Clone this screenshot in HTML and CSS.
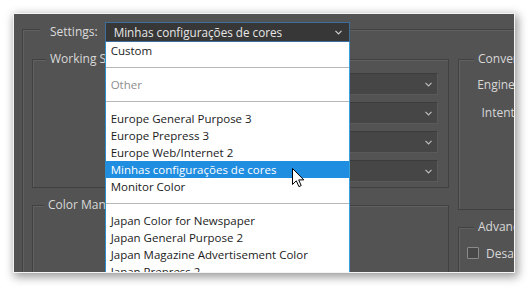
FILE: index.html
```html
<!DOCTYPE html>
<html lang="pt">
<head>
<meta charset="utf-8">
<title>Color Settings</title>
<link rel="stylesheet" href="styles.css">
</head>
<body>
<div class="panel">
  <div class="frame">
    <div class="settings-row">
      <span class="settings-label">Settings:</span>
      <div class="combo">
        <div class="combo-box">
          <span>Minhas configurações de cores</span>
          <svg class="chev" width="7" height="5" viewBox="0 0 7 5"><polyline points="0.5,0.8 3.5,3.8 6.5,0.8" fill="none" stroke="#cfcfcf" stroke-width="1.2"/></svg>
        </div>
        <ul class="menu">
          <li class="item">Custom</li>
          <li class="sep"></li>
          <li class="item muted">Other</li>
          <li class="sep"></li>
          <li class="item">Europe General Purpose 3</li>
          <li class="item">Europe Prepress 3</li>
          <li class="item">Europe Web/Internet 2</li>
          <li class="item active">Minhas configurações de cores</li>
          <li class="item">Monitor Color</li>
          <li class="sep"></li>
          <li class="item">Japan Color for Newspaper</li>
          <li class="item">Japan General Purpose 2</li>
          <li class="item">Japan Magazine Advertisement Color</li>
          <li class="item">Japan Prepress 2</li>
        </ul>
      </div>
    </div>
    <div class="columns">
      <div class="col-left">
        <section class="group working">
          <h3 class="group-title">Working Spaces</h3>
          <div class="selects">
            <div class="select"><svg class="chev" width="7" height="5" viewBox="0 0 7 5"><polyline points="0.5,0.8 3.5,3.8 6.5,0.8" fill="none" stroke="#bdbdbd" stroke-width="1.2"/></svg></div>
            <div class="select"><svg class="chev" width="7" height="5" viewBox="0 0 7 5"><polyline points="0.5,0.8 3.5,3.8 6.5,0.8" fill="none" stroke="#bdbdbd" stroke-width="1.2"/></svg></div>
            <div class="select"><svg class="chev" width="7" height="5" viewBox="0 0 7 5"><polyline points="0.5,0.8 3.5,3.8 6.5,0.8" fill="none" stroke="#bdbdbd" stroke-width="1.2"/></svg></div>
            <div class="select"><svg class="chev" width="7" height="5" viewBox="0 0 7 5"><polyline points="0.5,0.8 3.5,3.8 6.5,0.8" fill="none" stroke="#bdbdbd" stroke-width="1.2"/></svg></div>
          </div>
        </section>
        <section class="group policies">
          <h3 class="group-title">Color Management Policies</h3>
        </section>
      </div>
      <div class="col-right">
        <section class="group conversion">
          <h3 class="group-title">Conversion Options</h3>
          <div class="fields">
            <div class="field"><span class="field-label">Engine:</span></div>
            <div class="field"><span class="field-label">Intent:</span></div>
          </div>
        </section>
        <section class="group advanced">
          <h3 class="group-title">Advanced Controls</h3>
          <label class="check"><span class="box"></span>Desaturate Monitor Colors By:</label>
        </section>
      </div>
    </div>
  </div>
</div>
<svg class="cursor" width="14" height="21" viewBox="0 0 14 21"><path d="M1.5 1.5 L1.5 17.5 L5.3 13.8 L7.9 19.6 L10.2 18.6 L7.7 12.9 L12.8 12.9 Z" fill="#fff" stroke="#000" stroke-width="1" stroke-linejoin="miter"/></svg>
</body>
</html>
```

FILE: styles.css
```css
* { box-sizing: border-box; }
html, body { margin: 0; }
body {
  position: relative;
  width: 528px;
  height: 287px;
  padding: 13px;
  overflow: hidden;
  background: #fff;
  font-family: "Open Sans", "Noto Sans", sans-serif;
}
.panel {
  width: 502px;
  height: 260px;
  border: 1px solid #f4f4f4;
  background: #535353;
  box-shadow: 2px 3px 9px 1px rgba(0, 0, 0, 0.4);
  overflow: hidden;
}
.frame {
  width: 720px;
  height: 300px;
  margin: 15px 0 0 8px;
  border: 1px solid #414141;
  box-shadow: inset 1px 1px 0 #616161;
}
.settings-row {
  display: flex;
  align-items: center;
  height: 20px;
  margin-top: -8px;
}
.settings-label {
  flex: none;
  margin-left: 17px;
  padding: 0 7px 0 10px;
  line-height: 20px;
  background: #535353;
  color: #dcdcdc;
  font-size: 12px;
}
.combo {
  position: relative;
  flex: none;
  width: 245px;
  height: 20px;
}
.combo-box {
  height: 20px;
  display: flex;
  align-items: center;
  justify-content: space-between;
  padding: 0 7px 0 8px;
  background: #373737;
  border: 1px solid #3b6e9d;
  color: #e6e6e6;
  font-size: 11.7px;
  white-space: nowrap;
}
.chev { display: block; flex: none; }
.menu {
  position: absolute;
  top: 100%;
  left: 0;
  width: 245px;
  margin: 0;
  padding: 0;
  list-style: none;
  background: #fff;
  border-left: 1px solid #2b8fcf;
  border-right: 1px solid #35a2de;
  color: #1b1b1b;
  font-size: 11.5px;
  z-index: 2;
}
.item {
  height: 17px;
  line-height: 17px;
  padding-left: 5px;
  white-space: nowrap;
}
.item.muted { color: #8e8e8e; }
.item.active { background: #1f8de0; color: #fff; }
.sep {
  height: 1px;
  margin: 8px 0;
  background: #b7b7b7;
}
.columns {
  display: flex;
  gap: 9px;
  margin: 17px 0 0 9px;
}
.col-left {
  flex: none;
  width: 417px;
  display: flex;
  flex-direction: column;
  gap: 17px;
}
.col-right {
  flex: none;
  width: 200px;
  display: flex;
  flex-direction: column;
  gap: 17px;
}
.group {
  flex: none;
  border: 1px solid #414141;
  box-shadow: inset 1px 1px 0 #616161;
}
.working { height: 129px; }
.policies { height: 120px; }
.conversion { height: 151px; }
.advanced { height: 100px; }
.group-title {
  width: max-content;
  margin: -9px 0 0 13px;
  padding: 0 4px;
  background: #535353;
  color: #d8d8d8;
  font-size: 12px;
  font-weight: normal;
  line-height: 16px;
  white-space: nowrap;
}
.policies .group-title { margin-left: 11px; }
.conversion .group-title,
.advanced .group-title { margin-left: 15px; }
.selects {
  width: 290px;
  margin: 6px 10px 0 auto;
  display: flex;
  flex-direction: column;
  gap: 7px;
}
.select {
  height: 22px;
  display: flex;
  align-items: center;
  justify-content: flex-end;
  padding-right: 5px;
  background: #464646;
  border: 1px solid #5a5a5a;
  border-top-color: #3c3c3c;
}
.fields {
  margin-top: 6px;
  display: flex;
  flex-direction: column;
  gap: 6px;
}
.field {
  height: 22px;
  display: flex;
  align-items: center;
}
.field-label {
  width: 59px;
  flex: none;
  text-align: right;
  color: #d8d8d8;
  font-size: 12px;
  white-space: nowrap;
}
.check {
  height: 22px;
  margin: 7px 0 0 8px;
  display: flex;
  align-items: center;
  gap: 7px;
  color: #d8d8d8;
  font-size: 12px;
  white-space: nowrap;
}
.box {
  width: 12px;
  height: 12px;
  flex: none;
  background: #484848;
  border: 1px solid #8a8a8a;
  border-radius: 1px;
}
.cursor {
  position: absolute;
  left: 291px;
  top: 167px;
  z-index: 5;
}
```
